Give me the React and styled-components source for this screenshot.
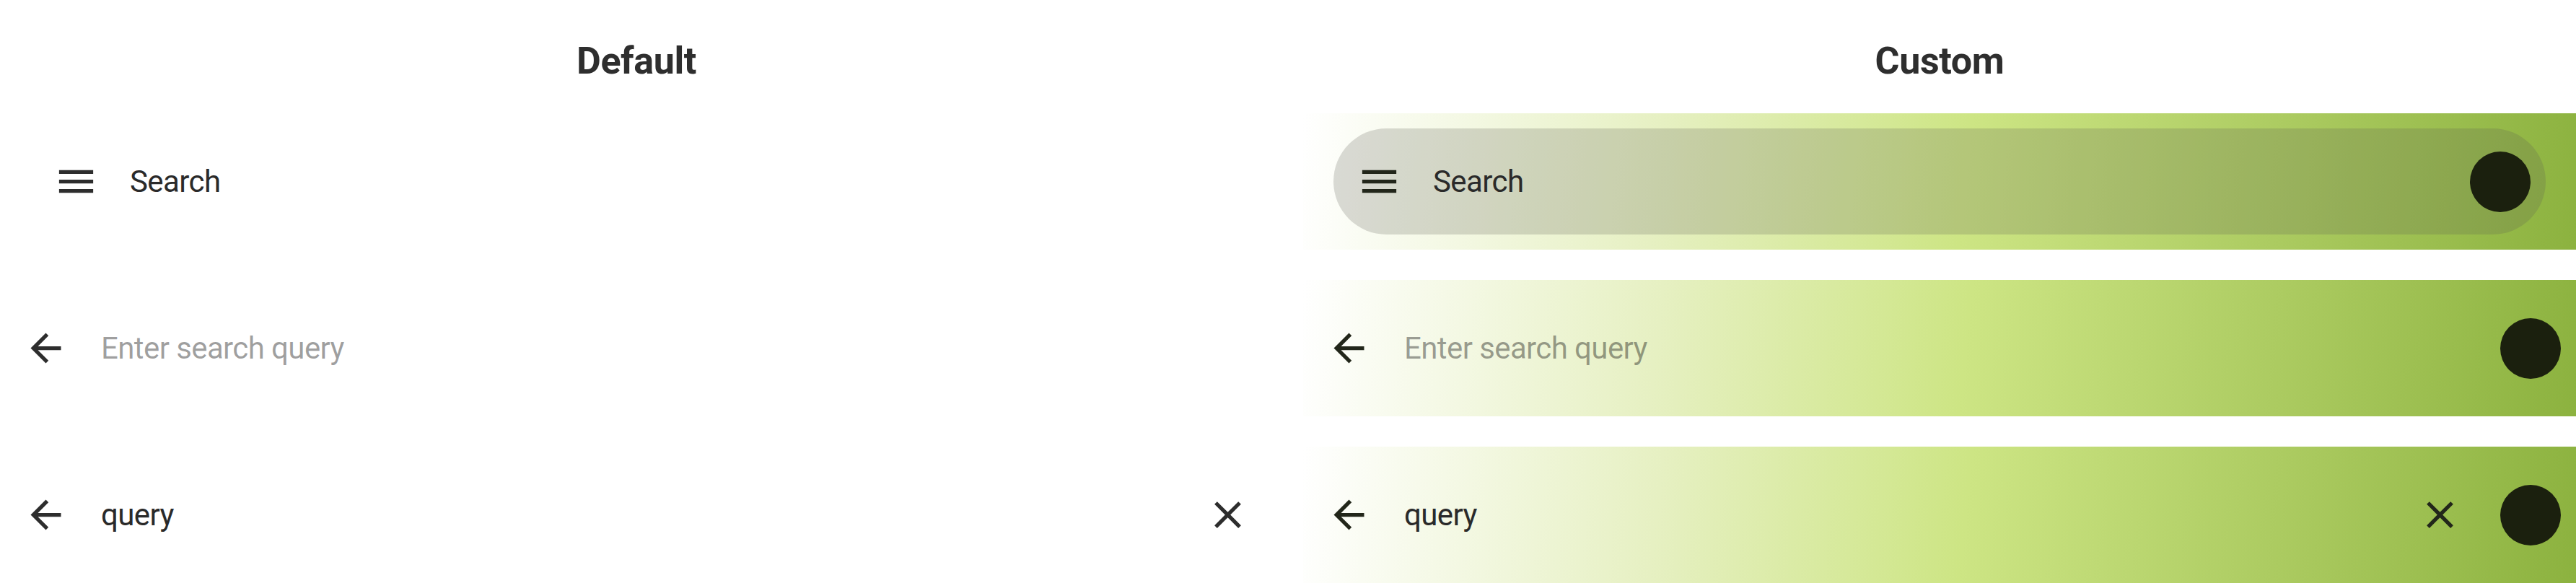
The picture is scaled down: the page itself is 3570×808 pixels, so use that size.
import React from 'react';
import styled, { createGlobalStyle } from 'styled-components';

const GlobalStyle = createGlobalStyle`
  html, body {
    margin: 0;
    padding: 0;
    background: #ffffff;
  }
  body {
    font-family: Roboto, 'Liberation Sans', sans-serif;
  }
`;

const Page = styled.div`
  display: grid;
  grid-template-columns: 1764px 1764px;
  column-gap: 42px;
  width: 3570px;
  height: 808px;
  overflow: hidden;
`;

const Column = styled.div`
  display: flex;
  flex-direction: column;
  gap: 42px;
`;

const Title = styled.h2`
  margin: 0;
  padding-top: 54px;
  height: 115px;
  box-sizing: border-box;
  text-align: center;
  font-size: 52px;
  line-height: 61px;
  font-weight: 700;
  letter-spacing: -0.4px;
  color: #2e2e2e;
`;

const Row = styled.div`
  height: 189px;
  box-sizing: border-box;
  display: flex;
  align-items: center;
  padding: ${(p) => (p.$bar ? '21px 42px' : '0')};
  background: ${(p) =>
    p.$custom
      ? 'linear-gradient(96deg, #ffffff 0%, #e6f0c2 28%, #cde584 52%, #8cb23f 100%)'
      : 'transparent'};
`;

const Bar = styled.div`
  flex: 1;
  height: 147px;
  border-radius: 74px;
  display: flex;
  align-items: center;
  padding-right: ${(p) => (p.$custom ? '21px' : '0')};
  background: ${(p) => (p.$custom ? 'rgba(90, 92, 80, 0.22)' : 'transparent')};
`;

const IconButton = styled.div`
  width: 126px;
  height: 126px;
  flex-shrink: 0;
  display: flex;
  align-items: center;
  justify-content: center;
  color: ${(p) => (p.$custom ? '#22261a' : '#2d2d2d')};

  svg {
    width: 63px;
    height: 63px;
    fill: currentColor;
  }
`;

const Label = styled.span`
  flex: 1;
  margin-left: ${(p) => (p.$bar ? '12px' : '14px')};
  font-size: 42px;
  letter-spacing: -0.6px;
  white-space: nowrap;
  color: ${(p) => (p.$hint ? 'rgba(0, 0, 0, 0.38)' : '#2a2a2a')};
`;

const Avatar = styled.div`
  width: 84px;
  height: 84px;
  flex-shrink: 0;
  border-radius: 50%;
  background: #1b200e;
  margin-left: ${(p) => (p.$afterIcon ? '21px' : '0')};
  margin-right: ${(p) => (p.$edge ? '21px' : '0')};
`;

const MenuIcon = () => (
  <svg viewBox="0 0 24 24">
    <path d="M3 18h18v-2H3v2zm0-5h18v-2H3v2zm0-7v2h18V6H3z" />
  </svg>
);

const BackIcon = () => (
  <svg viewBox="0 0 24 24">
    <path d="M20 11H7.83l5.59-5.59L12 4l-8 8 8 8 1.41-1.41L7.83 13H20v-2z" />
  </svg>
);

const CloseIcon = () => (
  <svg viewBox="0 0 24 24">
    <path d="M19 6.41L17.59 5 12 10.59 6.41 5 5 6.41 10.59 12 5 17.59 6.41 19 12 13.41 17.59 19 19 17.59 13.41 12z" />
  </svg>
);

const Variant = ({ title, custom }) => (
  <Column>
    <Title>{title}</Title>
    <Row $bar $custom={custom}>
      <Bar $custom={custom}>
        <IconButton $custom={custom}>
          <MenuIcon />
        </IconButton>
        <Label $bar>Search</Label>
        {custom && <Avatar />}
      </Bar>
    </Row>
    <Row $custom={custom}>
      <IconButton $custom={custom}>
        <BackIcon />
      </IconButton>
      <Label $hint>Enter search query</Label>
      {custom && <Avatar $edge />}
    </Row>
    <Row $custom={custom}>
      <IconButton $custom={custom}>
        <BackIcon />
      </IconButton>
      <Label>query</Label>
      <IconButton $custom={custom}>
        <CloseIcon />
      </IconButton>
      {custom && <Avatar $afterIcon $edge />}
    </Row>
  </Column>
);

export default function App() {
  return (
    <>
      <GlobalStyle />
      <Page>
        <Variant title="Default" />
        <Variant title="Custom" custom />
      </Page>
    </>
  );
}
